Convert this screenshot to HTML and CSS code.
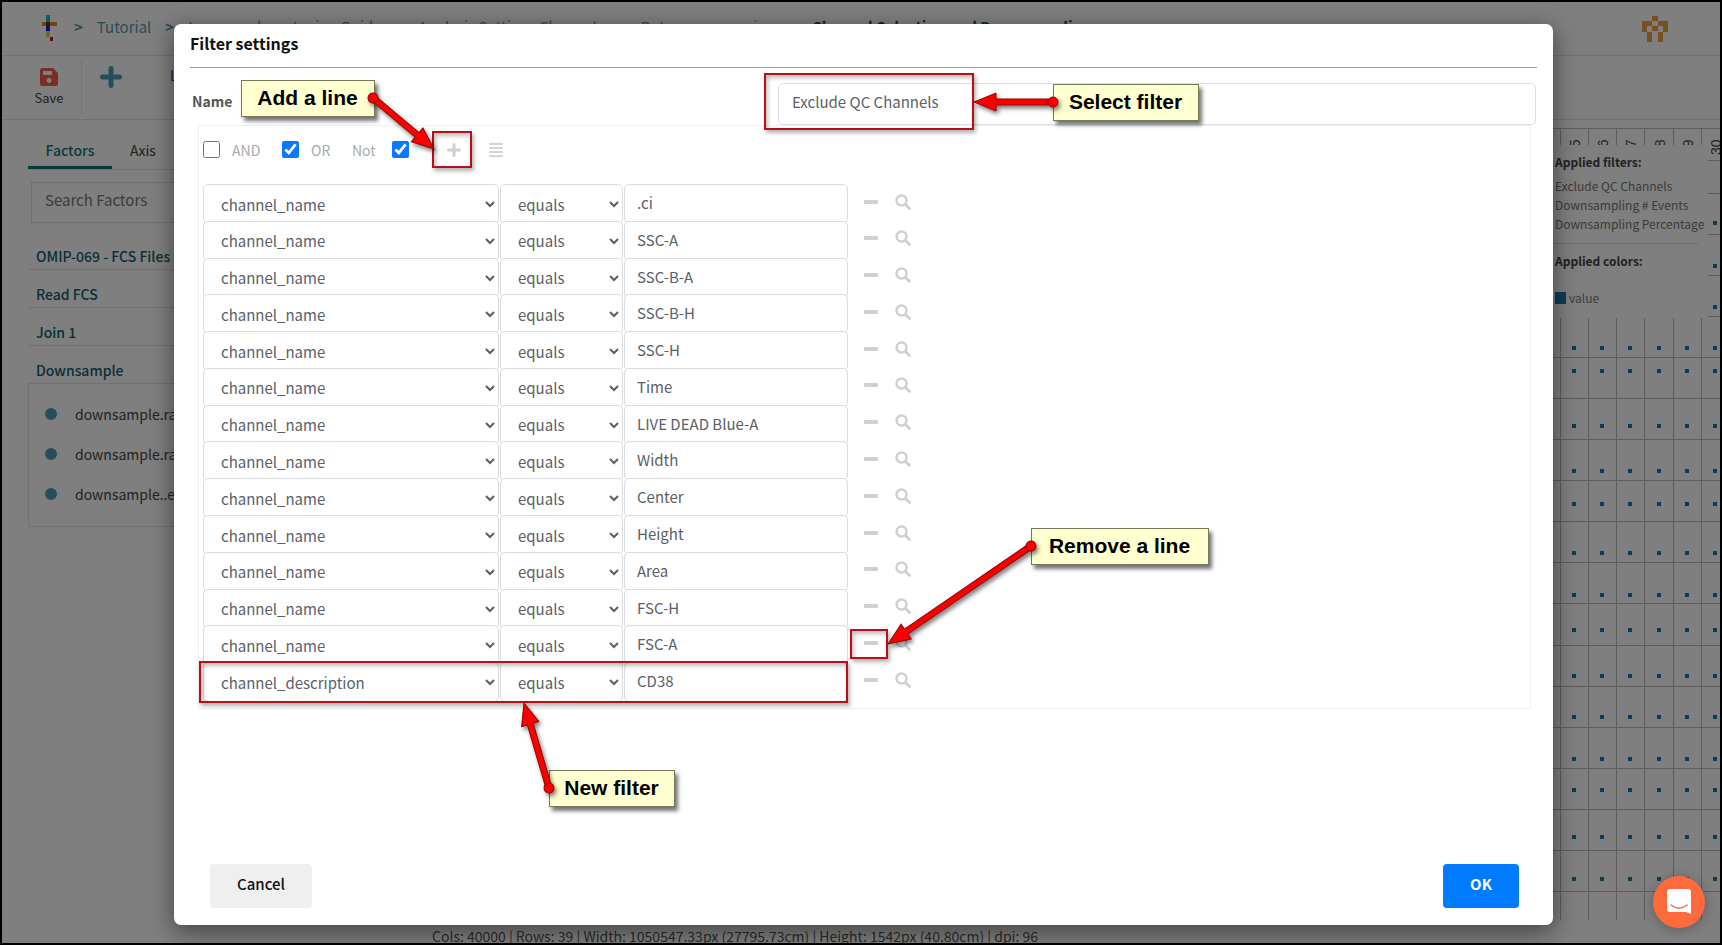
FILE: index.html
```html
<!DOCTYPE html>
<html lang="en">
<head>
<meta charset="utf-8">
<title>Filter settings</title>
<link rel="stylesheet" href="styles.css">
</head>
<body>
<div class="app">
  <header class="topbar">
    <svg class="logo" viewBox="0 0 15 27" width="15" height="27" aria-hidden="true">
      <path fill="#18b4d8" d="M4 0h4v7H4z"/><path fill="#e08a2c" d="M0 7h4v4H0zM8 7h7v4H8z"/><path fill="#7c2a10" d="M4 7h4v4H4z"/><path fill="#1a1acc" d="M4 11h4v5H4z"/><path fill="#e8d020" d="M4 16h4v6H4z"/><path fill="#d01030" d="M8 22h3v4H8z"/>
    </svg>
    <nav class="crumbs">
      <b>&gt;</b><a href="#">Tutorial</a><b>&gt;</b><a href="#">Immunophenotyping Guide</a><b>&gt;</b><a href="#">Analysis Settings Channels</a><b>&gt;</b><a href="#">Data preprocessing</a><b>&gt;</b><strong>Channel Selection and Downsampling</strong>
    </nav>
    <svg class="brand" viewBox="0 0 26 26" width="26" height="26" aria-hidden="true">
      <path fill="#f0a040" d="M10 0h6v5h-6zM0 5h10v5H5v6H0zM16 5h10v11h-5v-6h-5zM10 10h6v5h-6zM5 16h5v10H5zM16 16h5v10h-5z"/>
    </svg>
  </header>
  <div class="toolbar">
    <button class="tool save"><svg viewBox="0 0 18 18" width="18" height="18"><path fill="#f06048" fill-rule="evenodd" d="M2 0h11l5 5v11a2 2 0 0 1-2 2H2a2 2 0 0 1-2-2V2a2 2 0 0 1 2-2zM3 3v4h9V3zM9 10a2.500 2.500 0 1 0 .01 0z"/></svg><span>Save</span></button>
    <button class="tool add" aria-label="Add"><svg viewBox="0 0 22 22" width="22" height="22"><path stroke="#4a9cb0" stroke-width="5" stroke-linecap="round" d="M11 2.500v17M2.500 11h17"/></svg></button>
    <span class="layout">Layout</span>
  </div>
  <div class="main">
    <aside class="side">
      <div class="tabs"><button class="tab on">Factors</button><button class="tab">Axis</button></div>
      <input class="search" placeholder="Search Factors" aria-label="Search Factors">
      <h3>OMIP-069 - FCS Files</h3>
      <h3>Read FCS</h3>
      <h3>Join 1</h3>
      <h3>Downsample</h3>
      <ul class="leafs"><li>downsample.random</li><li>downsample.random</li><li>downsample..event</li></ul>
    </aside>
    <div class="plot">
      <svg class="grid" id="grid" width="222" height="800" aria-hidden="true"></svg>
      <section class="legend">
        <h4>Applied filters:</h4>
        <p>Exclude QC Channels</p><p>Downsampling # Events</p><p>Downsampling Percentage</p>
        <hr>
        <h4>Applied colors:</h4>
        <div class="value"><i></i>value</div>
      </section>
    </div>
  </div>
  <footer class="status">Cols: 40000 | Rows: 39 | Width: 1050547.33px (27795.73cm) | Height: 1542px (40.80cm) | dpi: 96</footer>
</div>

<div class="overlay">
  <form class="modal" role="dialog" aria-labelledby="title">
    <h2 id="title">Filter settings</h2>
    <div class="name-row"><label for="name">Name</label><input id="name" value="Exclude QC Channels"></div>
    <div class="group">
      <div class="ops">
        <input type="checkbox" id="and"><label for="and">AND</label>
        <input type="checkbox" id="or" checked><label for="or">OR</label>
        <label for="not" class="not">Not</label><input type="checkbox" id="not" checked>
        <button type="button" class="plus" aria-label="Add a line"><svg viewBox="0 0 14 14" width="14" height="14"><path stroke="#d0d0d0" stroke-width="3" stroke-linecap="round" d="M7 1.500v11M1.500 7h11"/></svg></button>
        <button type="button" class="list" aria-label="Add a group"><svg viewBox="0 0 14 14" width="14" height="14"><path stroke="#c8c8c8" stroke-width="1.500" d="M0 1h14M0 5h14M0 9h14M0 13h14"/></svg></button>
      </div>
      <div class="rows" id="rows"></div>
    </div>
    <div class="actions"><button type="button" class="cancel">Cancel</button><button type="button" class="ok">OK</button></div>
  </form>
</div>

<button class="chat" aria-label="Open chat"><svg viewBox="0 0 24 26" width="24" height="26"><path fill="#fff" d="M3 0h18a3 3 0 0 1 3 3v22l-5-2H3a3 3 0 0 1-3-3V3a3 3 0 0 1 3-3z"/><path fill="none" stroke="#ff6a3c" stroke-width="1.500" stroke-linecap="round" d="M4 16c5 4 11 4 16 0"/></svg></button>

<div class="notes">
  <div class="mark mark-plus"></div><div class="mark mark-name"></div><div class="mark mark-minus"></div><div class="mark mark-row"></div>
  <div class="note note-add">Add a line</div>
  <div class="note note-select">Select filter</div>
  <div class="note note-remove">Remove a line</div>
  <div class="note note-new">New filter</div>
  <svg class="arrows" viewBox="0 0 1722 945" width="1722" height="945" aria-hidden="true"><g id="arrows"></g></svg>
</div>
<script src="app.js"></script>
</body>
</html>
```
FILE: styles.css
```css
* { box-sizing: border-box; }
body {
  margin: 0;
  height: 100vh;
  overflow: hidden;
  font-family: "Noto Sans CJK SC", "Open Sans", sans-serif;
  font-size: 14px;
  line-height: 20px;
  color: #444;
}
button, input, select { font: inherit; color: inherit; }
button { border: 0; padding: 0; background: none; }
h2, h3, h4, p, ul { margin: 0; padding: 0; }
a { color: inherit; text-decoration: none; }
svg { display: block; fill: none; }

.app {
  height: 100vh;
  background: #fff;
  display: flex;
  flex-direction: column;
  overflow: hidden;
  padding: 2px;
}
.topbar {
  display: flex;
  align-items: center;
  height: 54px;
  flex: none;
  padding: 0 52px 0 40px;
  border-bottom: 1px solid #e4e4e4;
}
.crumbs {
  display: flex;
  flex: 1;
  gap: 14px;
  padding: 0 0 4px 17px;
  font-size: 15px;
  color: #5898a8;
  white-space: nowrap;
}
.crumbs strong { color: #105868; }
.toolbar {
  display: flex;
  height: 64px;
  flex: none;
  border-bottom: 1px solid #e4e4e4;
}
.tool { display: flex; flex-direction: column; align-items: center; }
.save { width: 80px; margin: 4px 0; padding: 8px 0 0 15px; border-right: 1px solid #e8e8e8; font-size: 13px; gap: 2px; }
.add { width: 58px; padding-top: 10px; }
.layout { margin-left: 30px; padding-top: 9px; }
.main { display: flex; flex: 1; min-height: 0; justify-content: space-between; }

.side { width: 240px; padding: 16px 0 0 26px; }
.tabs { display: flex; height: 34px; border-bottom: 1px solid #e4e4e4; }
.tab { width: 84px; padding-bottom: 3px; border-bottom: 3px solid transparent; }
.tab.on { color: #147080; border-color: #147080; font-weight: 500; }
.tab:last-child { width: 62px; }
.search { display: block; width: 220px; height: 41px; margin: 12px 0 9px 3px; padding: 0 13px 6px; border: 1px solid #e0e0e0; font-size: 15px; background: #fff; }
.search::placeholder { color: #777; opacity: 1; }
.side h3 { height: 38px; padding: 14px 0 0 8px; border-bottom: 1px solid #e4e4e4; font-size: 14px; font-weight: 500; color: #106070; }
.leafs { list-style: none; height: 143px; border: 1px solid #e4e4e4; border-top: 0; padding: 10px 0 0 16px; }
.leafs li { display: flex; align-items: center; gap: 18px; height: 40px; font-size: 14px; white-space: nowrap; }
.leafs li::before { content: ""; width: 12px; height: 12px; border-radius: 50%; background: #4a9cb0; }

.plot { position: relative; width: 220px; overflow: hidden; }
.grid text { font: 14px "Liberation Sans", sans-serif; fill: #444; }
.legend { position: absolute; top: 25px; right: 12px; width: 202px; height: 173px; padding: 7px 0 0 49px; background: #fff; font-size: 12px; color: #777; white-space: nowrap; }
.legend h4 { font-size: 12px; font-weight: 700; color: #444; margin-bottom: 4px; }
.legend p { line-height: 19px; }
.legend hr { margin: 10px 10px 7px 0; border: 0; border-top: 1px solid #ddd; }
.value { display: flex; align-items: center; gap: 3px; margin-top: 17px; }
.value i { width: 11px; height: 12px; background: #1878b8; }
.status { position: absolute; left: 432px; top: 926px; font-size: 14px; color: #555; white-space: nowrap; }

.overlay {
  position: absolute;
  inset: 0;
  display: flex;
  padding: 22px 167px 18px 172px;
  border: 2px solid #000;
  background: rgba(0, 0, 0, .5);
}
.modal {
  display: flex;
  flex-direction: column;
  flex: 1;
  padding: 9px 16px 17px;
  border-radius: 7px;
  background: #fff;
  box-shadow: 0 6px 24px rgba(0, 0, 0, .5);
}
.modal h2 { height: 35px; border-bottom: 1px solid #6cb0b0; font-size: 16px; font-weight: 700; color: #111; }
.name-row { display: grid; grid-template-columns: 586px 1fr; align-items: center; margin: 15px 1px 0 2px; }
.name-row label { padding-bottom: 6px; font-weight: 700; color: #555; }
.name-row input { height: 42px; padding: 0 13px 5px; border: 1px solid #dce0e4; border-radius: 5px; font-size: 15px; color: #5a6068; }
.group { margin: 0 6px 0 8px; padding: 15px 4px 9px; border: 1px solid #f0f0f2; }
.ops { display: flex; align-items: center; height: 17px; color: #aaa; }
.ops input { width: 17px; height: 17px; margin: 0; accent-color: #0a78ff; }
.ops label { width: 50px; margin-left: 12px; }
.ops #or + label { width: 29px; }
.ops .not { width: 40px; }
.plus { margin-left: 38px; }
.list { margin-left: 28px; }
.rows { display: grid; grid-auto-rows: 1fr; height: 515px; margin-top: 26px; }
.row { display: grid; grid-template-columns: 296px 123px 224px 14px 16px; column-gap: 1px; align-items: start; min-height: 0; }
.row select, .row input {
  width: 100%;
  min-width: 0;
  height: 40px;
  border: 1px solid #d8dce0;
  border-radius: 5px;
  background: #fff;
  font-size: 15px;
  color: #5a6068;
}
.row select { padding: 0 0 0 13px; }
.row input { padding: 0 12px 3px; }
.row button { height: 35px; }
.row .minus { margin-left: 15px; width: 14px; }
.row .find { margin-left: 31px; width: 16px; }
.actions { display: flex; justify-content: space-between; margin: auto 18px 0 20px; font-weight: 500; font-size: 15px; }
.actions button { height: 44px; padding-bottom: 4px; border-radius: 4px; }
.cancel { width: 102px; background: #efefef; color: #111; }
.ok { width: 76px; background: #007bff; color: #fff; font-weight: 700; }

.chat { position: absolute; right: 17px; bottom: 17px; width: 52px; height: 52px; display: flex; align-items: center; justify-content: center; border-radius: 50%; background: #ff6a3c; box-shadow: 0 2px 12px rgba(0, 0, 0, .25); }

.notes { position: absolute; inset: 0; pointer-events: none; }
.note {
  position: absolute;
  height: 37px;
  padding-right: 1px;
  border: 1px solid #77775a;
  background: #ffffcf;
  box-shadow: 3px 4px 4px rgba(0, 0, 0, .55);
  font: bold 21px/34px "Liberation Sans", sans-serif;
  color: #000;
  text-align: center;
  white-space: nowrap;
}
.note-add { left: 241px; top: 80px; width: 134px; }
.note-select { left: 1053px; top: 84px; width: 146px; }
.note-remove { left: 1031px; top: 528px; width: 178px; }
.note-new { left: 549px; top: 770px; width: 126px; }
.mark { position: absolute; border: 2px solid #b81018; box-shadow: 2px 3px 4px rgba(0, 0, 0, .3), inset 2px 3px 4px rgba(0, 0, 0, .25); }
.mark-plus { left: 432px; top: 131px; width: 40px; height: 37px; }
.mark-name { left: 764px; top: 73px; width: 210px; height: 57px; }
.mark-minus { left: 850px; top: 629px; width: 38px; height: 30px; }
.mark-row { left: 199px; top: 661px; width: 649px; height: 42px; }
.arrows { position: absolute; left: 0; top: 0; filter: drop-shadow(2px 3px 2px rgba(0, 0, 0, .5)); }
.arrows path, .arrows circle { fill: #f80000; stroke: #900; stroke-width: 1; }
```
FILE: app.js
```js
const names = ['.ci', 'SSC-A', 'SSC-B-A', 'SSC-B-H', 'SSC-H', 'Time', 'LIVE DEAD Blue-A', 'Width', 'Center', 'Height', 'Area', 'FSC-H', 'FSC-A', 'CD38'];
document.getElementById('rows').innerHTML = names.map((n, i) => `
  <div class="row">
    <select aria-label="Factor ${i + 1}"><option>${n === 'CD38' ? 'channel_description' : 'channel_name'}</option></select>
    <select aria-label="Comparison ${i + 1}"><option>equals</option></select>
    <input aria-label="Value ${i + 1}" value="${n}">
    <button type="button" class="minus" aria-label="Remove line"><svg viewBox="0 0 14 4" width="14" height="4"><rect width="14" height="4" rx="1" fill="#d0d0d0"/></svg></button>
    <button type="button" class="find" aria-label="Search value"><svg viewBox="0 0 16 16" width="16" height="16"><circle cx="6.500" cy="6.500" r="5" stroke="#d0d0d0" stroke-width="2.500"/><path stroke="#d0d0d0" stroke-width="2.800" stroke-linecap="round" d="M10.500 10.500l4 4"/></svg></button>
  </div>`).join('');

/* Heat-map grid behind the dialog */
const xs = [32, 60, 88, 116, 144, 173, 201];
const ys = [8, 40, 73, 114, 155, 196, 237, 278, 319, 360, 401, 442, 483, 525, 566, 607, 648, 689, 730, 771, 800];
const dots = [103, 146, 187, 228, 251, 306, 351, 384, 433, 475, 510, 556, 597, 639, 670, 717, 759];
let g = '';
xs.forEach(x => { g += `<path stroke="#bbb" d="M${x}.5 8V800"/>`; });
ys.forEach(y => { g += `<path stroke="#bbb" d="M0 ${y}.500H222"/>`; });
[74, 102, 130, 159, 187, 215].forEach((x, i) => {
  g += `<text transform="translate(${x + 6} 35) rotate(-90)">${25 + i}</text>`;
  dots.forEach(y => { g += `<rect x="${x - 2}" y="${y - 2}" width="4" height="4" fill="#1878a8"/>`; });
});
document.getElementById('grid').innerHTML = g;

/* Arrows: start point to tip */
const arrows = [[373, 98, 434, 149], [1053, 102, 974, 102], [1031, 546, 888, 644], [549, 788, 524, 703]];
document.getElementById('arrows').innerHTML = arrows.map(([x, y, u, v]) => {
  const len = Math.hypot(u - x, v - y);
  const deg = Math.atan2(v - y, u - x) * 180 / Math.PI;
  return `<g transform="translate(${x} ${y}) rotate(${deg})"><path d="M0 -3H${len - 22}V-9L${len} 0L${len - 22} 9V3H0z"/><circle r="5"/></g>`;
}).join('');
```
